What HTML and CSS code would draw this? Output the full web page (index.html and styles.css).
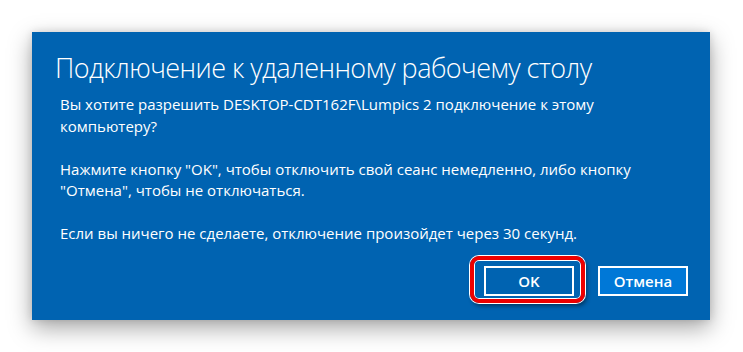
FILE: index.html
```html
<!DOCTYPE html>
<html lang="ru">
<head>
<meta charset="utf-8">
<link rel="stylesheet" href="styles.css">
</head>
<body>
<div class="page">
  <div class="dialog">
    <h1 class="title">Подключение к удаленному рабочему столу</h1>
    <div class="message">
      <p>Вы хотите разрешить DESKTOP-CDT162F\Lumpics 2 подключение к этому компьютеру?</p>
      <p>Нажмите кнопку "OK", чтобы отключить свой сеанс немедленно, либо кнопку "Отмена", чтобы не отключаться.</p>
      <p>Если вы ничего не сделаете, отключение произойдет через 30 секунд.</p>
    </div>
    <div class="actions">
      <button class="btn btn-ok">OK</button>
      <button class="btn btn-cancel">Отмена</button>
    </div>
  </div>
</div>
</body>
</html>
```
FILE: styles.css
```css
html, body {
  margin: 0;
  padding: 0;
  background: #ffffff;
}
.page {
  padding: 32px 33px 32px 32px;
  width: 678px;
}
.dialog {
  width: 678px;
  height: 288px;
  box-sizing: border-box;
  background: #0063b1;
  color: #ffffff;
  font-family: "Open Sans", "Noto Sans", sans-serif;
  padding: 18px 22px 0 23px;
  box-shadow: 0 8px 22px rgba(0, 0, 0, 0.35), 0 0 8px rgba(0, 0, 0, 0.12);
  display: flex;
  flex-direction: column;
}
.title {
  margin: 0;
  font-size: 27px;
  font-weight: 300;
  line-height: 36px;
  letter-spacing: -0.55px;
  white-space: nowrap;
}
.message {
  margin-top: 8px;
  padding-left: 5px;
  padding-right: 45px;
  font-size: 15px;
  line-height: 21.5px;
}
.message p {
  margin: 0 0 21.5px 0;
}
.message p:last-child {
  margin-bottom: 0;
}
.actions {
  margin-top: auto;
  margin-bottom: 24px;
  display: flex;
  justify-content: flex-end;
  gap: 24px;
}
.btn {
  width: 90px;
  height: 30px;
  box-sizing: border-box;
  border: 2px solid #ffffff;
  color: #ffffff;
  font-family: "Open Sans", "Noto Sans", sans-serif;
  font-size: 15px;
  font-weight: 600;
  padding: 0;
  margin: 0;
}
.btn-ok {
  background: #0063b1;
  position: relative;
}
.btn-ok::after {
  content: "";
  position: absolute;
  left: -16px;
  right: -13px;
  top: -12px;
  bottom: -9px;
  border: 4px solid #ee0000;
  border-radius: 9px;
  box-shadow: 0 0 0 1px #ffffff, inset 0 0 0 1px #ffffff, 2px 3px 4px rgba(0, 0, 0, 0.45);
}
.btn-cancel {
  background: #0078d7;
}
```
